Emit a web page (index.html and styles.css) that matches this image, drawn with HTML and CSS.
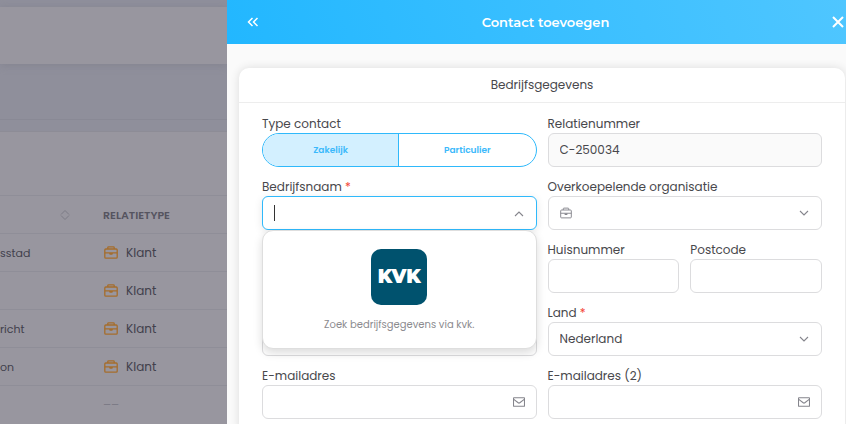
FILE: index.html
```html
<!DOCTYPE html>
<html lang="nl">
<head>
<meta charset="utf-8">
<meta name="viewport" content="width=device-width, initial-scale=1">
<title>Contact toevoegen</title>
<link rel="stylesheet" href="styles.css">
</head>
<body>
<svg class="sprite" aria-hidden="true">
  <symbol id="case" viewBox="0 0 14 13">
    <rect x="0.8" y="3" width="12.4" height="9.2" rx="1"/>
    <path d="M3.800 3V1.6a.8.8 0 0 1 .8-.8h4.800a.8.8 0 0 1 .8.8V3M0.800 6.800h12.400"/>
    <path d="M5.200 7h3.600v.8q0 1-1 1h-1.600q-1 0-1-1z" fill="currentColor" stroke="none"/>
  </symbol>
  <symbol id="mail" viewBox="0 0 12 10">
    <rect x="0.5" y="0.7" width="11" height="8.6" rx="0.5"/>
    <path d="M0.8 2.400l4.400 3.400q.8.6 1.600 0l4.400-3.400"/>
  </symbol>
  <symbol id="down" viewBox="0 0 12 10"><path d="M2 3l4 4 4-4"/></symbol>
  <symbol id="up" viewBox="0 0 12 10"><path d="M2 8l4-4 4 4"/></symbol>
</svg>
<div class="app">
  <section class="list">
    <div class="topbar"></div>
    <div class="toolbar"></div>
    <div class="panel">
      <table class="table">
        <thead>
          <tr>
            <th class="place"><svg class="sort" viewBox="0 0 10 12" aria-hidden="true"><path d="M1 5.500l4-4 4 4M1 6.500l4 4 4-4"/></svg></th>
            <th>RELATIETYPE</th>
          </tr>
        </thead>
        <tbody>
          <tr><td class="place">sstad</td><td><span class="type"><svg class="case"><use href="#case"/></svg>Klant</span></td></tr>
          <tr><td class="place"></td><td><span class="type"><svg class="case"><use href="#case"/></svg>Klant</span></td></tr>
          <tr><td class="place">richt</td><td><span class="type"><svg class="case"><use href="#case"/></svg>Klant</span></td></tr>
          <tr><td class="place">on</td><td><span class="type"><svg class="case"><use href="#case"/></svg>Klant</span></td></tr>
          <tr><td class="place"></td><td class="none">––</td></tr>
        </tbody>
      </table>
    </div>
  </section>

  <main class="drawer">
    <header class="head">
      <button class="icon-btn" type="button" aria-label="Uitklappen"><svg width="12" height="12" viewBox="0 0 12 12"><path d="M5.500 2L1.500 6l4 4M10.500 2L6.500 6l4 4"/></svg></button>
      <h1>Contact toevoegen</h1>
      <button class="icon-btn close" type="button" aria-label="Sluiten"><svg width="12" height="12" viewBox="0 0 12 12"><path d="M1 1l10 10M11 1L1 11"/></svg></button>
    </header>
    <div class="content">
      <form class="card">
        <h2>Bedrijfsgegevens</h2>
        <div class="grid">
          <fieldset class="field">
            <legend>Type contact</legend>
            <div class="toggle">
              <label><input type="radio" name="type" checked><span>Zakelijk</span></label>
              <label><input type="radio" name="type"><span>Particulier</span></label>
            </div>
          </fieldset>
          <div class="field">
            <label for="nr">Relatienummer</label>
            <div class="control readonly"><input id="nr" type="text" value="C-250034" readonly></div>
          </div>

          <div class="field">
            <label for="name">Bedrijfsnaam <b>*</b></label>
            <div class="control active">
              <span class="caret"></span>
              <input id="name" type="text">
              <svg class="icon"><use href="#up"/></svg>
              <div class="popup">
                <div class="kvk">KVK</div>
                <p>Zoek bedrijfsgegevens via kvk.</p>
              </div>
            </div>
          </div>
          <div class="field">
            <label for="org">Overkoepelende organisatie</label>
            <div class="control">
              <svg class="icon lead"><use href="#case"/></svg>
              <select id="org"><option></option></select>
              <svg class="icon"><use href="#down"/></svg>
            </div>
          </div>

          <div class="field"></div>
          <div class="pair">
            <div class="field">
              <label for="house">Huisnummer</label>
              <div class="control"><input id="house" type="text"></div>
            </div>
            <div class="field">
              <label for="zip">Postcode</label>
              <div class="control"><input id="zip" type="text"></div>
            </div>
          </div>

          <div class="field end">
            <div class="control"><input type="text" aria-label="Plaats"></div>
          </div>
          <div class="field">
            <label for="country">Land <b>*</b></label>
            <div class="control">
              <select id="country"><option>Nederland</option></select>
              <svg class="icon"><use href="#down"/></svg>
            </div>
          </div>

          <div class="field">
            <label for="mail1">E-mailadres</label>
            <div class="control"><input id="mail1" type="email"><svg class="icon"><use href="#mail"/></svg></div>
          </div>
          <div class="field">
            <label for="mail2">E-mailadres (2)</label>
            <div class="control"><input id="mail2" type="email"><svg class="icon"><use href="#mail"/></svg></div>
          </div>
        </div>
      </form>
    </div>
  </main>
</div>
</body>
</html>
```

FILE: styles.css
```css
* { box-sizing: border-box; }

body {
  margin: 0;
  font-family: Poppins, Inter, sans-serif;
  font-size: 12px;
  line-height: 18px;
  color: #48484c;
}

h1, h2, p { margin: 0; }
svg { fill: none; stroke: currentColor; flex: none; }
.sprite { display: none; }

.app {
  display: flex;
  height: 100vh;
  overflow: hidden;
}

/* Dimmed contact list */
.list {
  flex: 0 0 227px;
  padding-top: 7px;
  overflow: hidden;
  background: #8f8f9b;
  color: #41404c;
}
.topbar {
  height: 57px;
  background: #98969f;
  box-shadow: 0 1px 8px #83838f;
}
.toolbar {
  height: 56px;
  margin-bottom: 11px;
  border-bottom: 1px solid #898995;
}
.panel {
  min-height: 100%;
  padding-top: 63px;
  background: #98969f;
  border-top: 1px solid #8d8c96;
}
.table {
  width: 100%;
  border-collapse: collapse;
  table-layout: fixed;
}
th, td {
  height: 38px;
  padding: 0;
  text-align: left;
  border-top: 1px solid #8f8e98;
}
th {
  font-size: 11px;
  font-weight: 600;
  color: #55545f;
}
.place {
  width: 103px;
  font-size: 11px;
}
.sort {
  display: block;
  width: 10px;
  height: 12px;
  margin-left: 60px;
  color: #7c7b86;
}
.type {
  display: flex;
  align-items: center;
  gap: 8px;
}
.case {
  width: 14px;
  height: 13px;
  margin-left: 1px;
  color: #a56d2c;
  stroke-width: 1.3;
}
.none { color: #7c7b86; }

/* Drawer */
.drawer {
  display: flex;
  flex-direction: column;
  flex: 1;
  min-width: 0;
  background: #fafafa;
}
.head {
  display: flex;
  align-items: center;
  flex: none;
  height: 44px;
  padding: 0 2px 0 20px;
  color: #fff;
  background: linear-gradient(70deg, #22b7ff, #4fc6ff);
}
.head h1 {
  flex: 1;
  font-family: Montserrat, Inter, sans-serif;
  font-size: 13px;
  font-weight: 600;
  text-align: center;
}
.icon-btn {
  display: flex;
  padding: 0;
  border: 0;
  background: none;
  color: inherit;
}
.icon-btn svg { stroke-width: 1.5; }
.close svg { stroke-width: 2; }
.content {
  flex: 1;
  padding: 24px 1px 0 12px;
}
.card {
  height: 100%;
  background: #fff;
  border-radius: 10px 10px 0 0;
  box-shadow: 0 0 10px rgba(0, 0, 0, .12);
}
.card h2 {
  padding: 8px;
  font-size: 12px;
  font-weight: 400;
  text-align: center;
  border-bottom: 1px solid #ededed;
}
.grid {
  display: grid;
  grid-template-columns: 1fr 1fr;
  gap: 11px;
  padding: 12px 23px;
}
.pair {
  display: grid;
  grid-template-columns: 1fr 1fr;
  gap: 11px;
}
.field {
  display: flex;
  flex-direction: column;
  min-width: 0;
  margin: 0;
  padding: 0;
  border: 0;
}
.field.end { justify-content: flex-end; }
.field legend { padding: 0; }
.field b {
  font-weight: 400;
  color: #f44336;
}

.control {
  position: relative;
  display: flex;
  align-items: center;
  height: 34px;
  padding: 0 11px;
  border: 1px solid #dcdcde;
  border-radius: 6px;
  background: #fff;
}
.readonly { background: #fafafa; }
.active {
  border-color: #2fb9fb;
  box-shadow: 0 2px 8px rgba(0, 0, 0, .1);
}
.control input, .control select {
  flex: 1;
  min-width: 0;
  padding: 0;
  border: 0;
  outline: 0;
  appearance: none;
  background: none;
  font: inherit;
  color: inherit;
}
.icon {
  width: 12px;
  height: 10px;
  color: #85858c;
  stroke-width: 1.1;
}
.lead { height: 12px; }
.caret {
  width: 1px;
  height: 16px;
  background: #333;
}

.toggle {
  display: grid;
  grid-template-columns: 1fr 1fr;
  height: 34px;
  overflow: hidden;
  border: 1px solid #2fb9fb;
  border-radius: 17px;
}
.toggle label {
  display: grid;
  font-size: 9px;
  font-weight: 600;
  color: #3bb9fb;
}
.toggle input {
  grid-area: 1 / 1;
  margin: 0;
  appearance: none;
}
.toggle span {
  grid-area: 1 / 1;
  display: grid;
  place-items: center;
}
.toggle input:checked + span {
  background: #d3f0ff;
  border-right: 1px solid #2fb9fb;
}

.popup {
  position: absolute;
  z-index: 2;
  top: 100%;
  left: -1px;
  right: -1px;
  display: flex;
  flex-direction: column;
  align-items: center;
  gap: 11px;
  margin-top: 1px;
  padding: 18px 11px 14px;
  border: 1px solid #dedede;
  border-radius: 11px;
  background: #fff;
  box-shadow: 0 4px 10px rgba(0, 0, 0, .14);
}
.popup p {
  font-size: 10px;
  color: #8b8b8f;
}
.kvk {
  display: grid;
  place-items: center;
  width: 56px;
  height: 56px;
  border-radius: 10px;
  background: #00526e;
  color: #fff;
  font-family: Montserrat, Inter, sans-serif;
  font-size: 19px;
  font-weight: 900;
}
```
